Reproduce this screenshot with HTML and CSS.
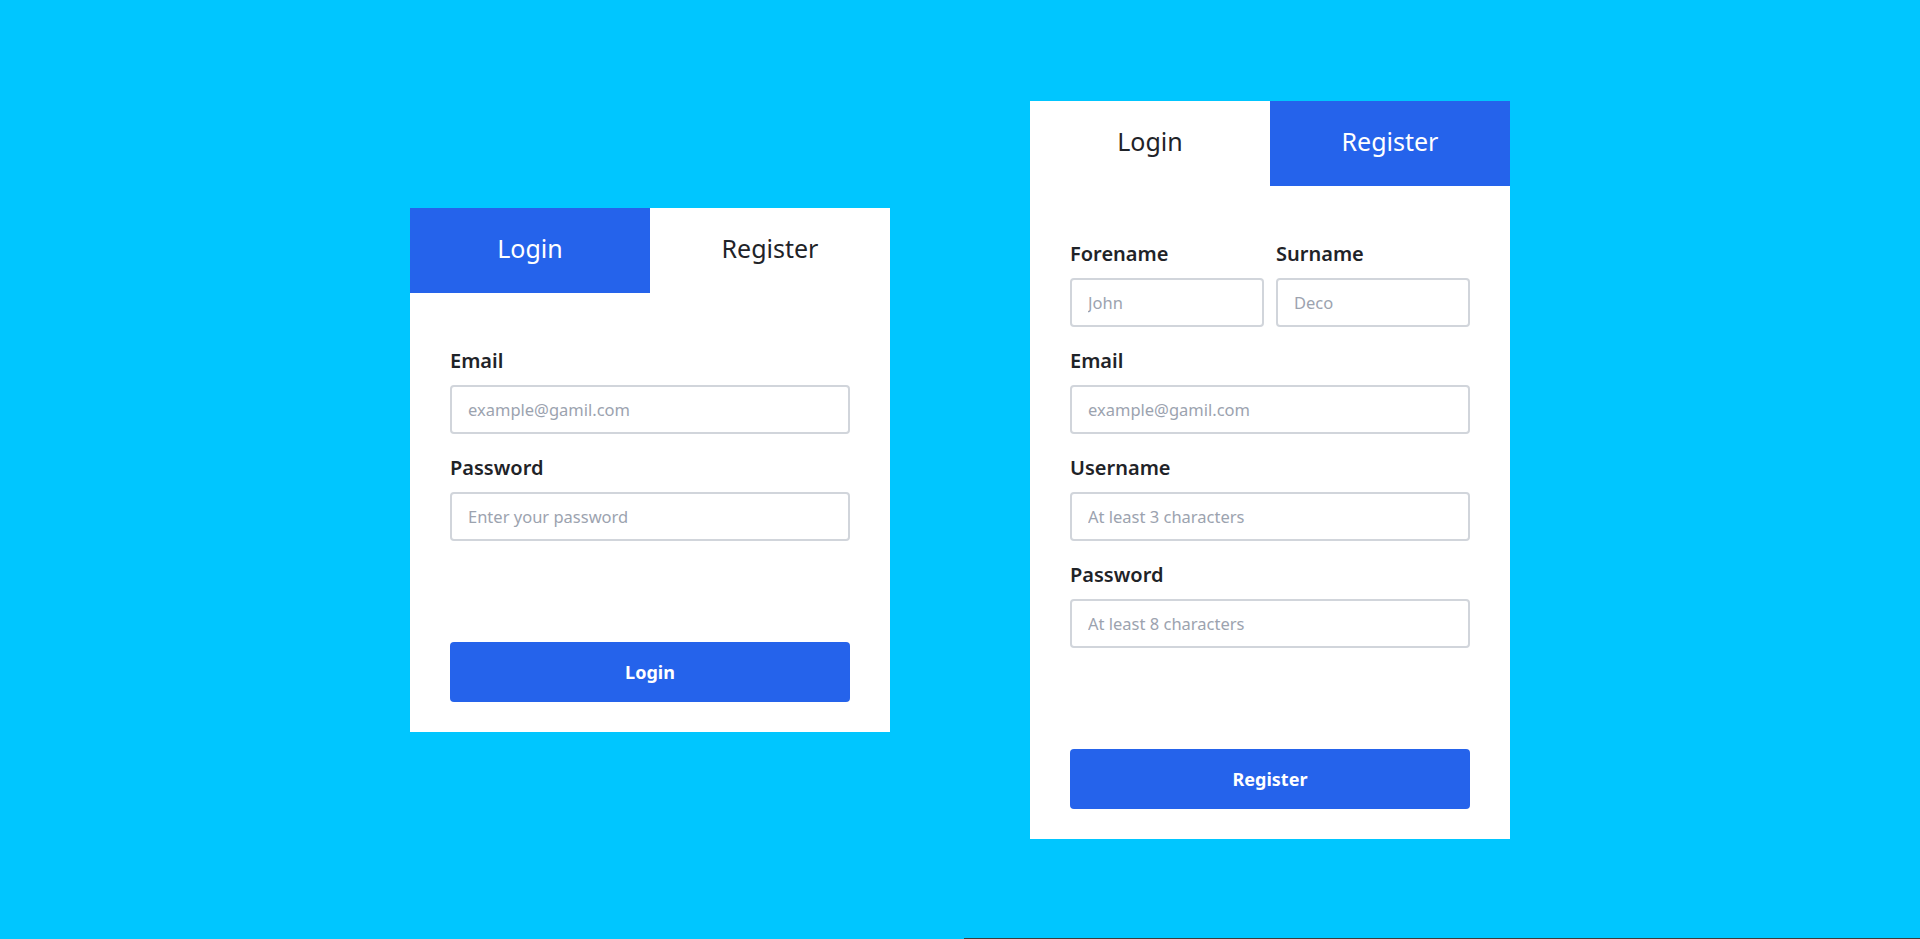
FILE: index.html
```html
<!DOCTYPE html>
<html lang="en">
<head>
<meta charset="utf-8">
<title>Login / Register</title>
<link rel="stylesheet" href="styles.css">
</head>
<body>
<main class="stage">
  <section class="card">
    <div class="tabs">
      <div class="tab tab-active">Login</div>
      <div class="tab">Register</div>
    </div>
    <form class="form">
      <div class="field">
        <label class="label">Email</label>
        <input class="input" type="text" placeholder="example@gamil.com">
      </div>
      <div class="field">
        <label class="label">Password</label>
        <input class="input" type="password" placeholder="Enter your password">
      </div>
      <button class="btn" type="button">Login</button>
    </form>
  </section>

  <section class="card">
    <div class="tabs">
      <div class="tab">Login</div>
      <div class="tab tab-active">Register</div>
    </div>
    <form class="form">
      <div class="field-row">
        <div class="field">
          <label class="label">Forename</label>
          <input class="input" type="text" placeholder="John">
        </div>
        <div class="field">
          <label class="label">Surname</label>
          <input class="input" type="text" placeholder="Deco">
        </div>
      </div>
      <div class="field">
        <label class="label">Email</label>
        <input class="input" type="text" placeholder="example@gamil.com">
      </div>
      <div class="field">
        <label class="label">Username</label>
        <input class="input" type="text" placeholder="At least 3 characters">
      </div>
      <div class="field">
        <label class="label">Password</label>
        <input class="input" type="password" placeholder="At least 8 characters">
      </div>
      <button class="btn" type="button">Register</button>
    </form>
  </section>
</main>
<div class="edge-line"></div>
</body>
</html>
```

FILE: styles.css
```css
* { box-sizing: border-box; }

html, body {
  margin: 0;
  padding: 0;
  height: 100%;
}

body {
  background: #00c6ff;
  font-family: "Noto Sans", "Open Sans", sans-serif;
  color: #1f2328;
  overflow: hidden;
}

.stage {
  height: 100vh;
  display: flex;
  align-items: center;
  justify-content: center;
  gap: 140px;
}

.card {
  width: 480px;
  background: #ffffff;
  display: flex;
  flex-direction: column;
}

.tabs {
  display: grid;
  grid-template-columns: 1fr 1fr;
  height: 85px;
}

.tab {
  display: flex;
  align-items: center;
  justify-content: center;
  font-size: 25px;
  color: #1f2328;
  background: #ffffff;
  padding-bottom: 4px;
}

.tab-active {
  background: #2563eb;
  color: #ffffff;
}

.form {
  display: flex;
  flex-direction: column;
  padding: 56px 40px 30px;
}

.field {
  display: flex;
  flex-direction: column;
}

.form > .field + .field,
.form > .field-row + .field {
  margin-top: 22px;
}

.field-row {
  display: grid;
  grid-template-columns: 1fr 1fr;
  gap: 12px;
}

.label {
  font-size: 20px;
  line-height: 24px;
  font-weight: 600;
  color: #1f2328;
  margin-bottom: 12px;
}

.input {
  height: 49px;
  width: 100%;
  border: 2px solid #d1d5db;
  border-radius: 4px;
  padding: 0 16px;
  font-family: inherit;
  font-size: 16.5px;
  color: #1f2328;
  background: #ffffff;
  outline: none;
}

.input::placeholder {
  color: #9ca3af;
}

.btn {
  margin-top: 101px;
  height: 60px;
  width: 100%;
  border: none;
  border-radius: 4px;
  background: #2563eb;
  color: #ffffff;
  font-family: inherit;
  font-size: 18px;
  font-weight: 700;
}

.edge-line {
  position: fixed;
  left: 964px;
  right: 0;
  bottom: 0;
  height: 1px;
  background: #3c3c3c;
}
```
